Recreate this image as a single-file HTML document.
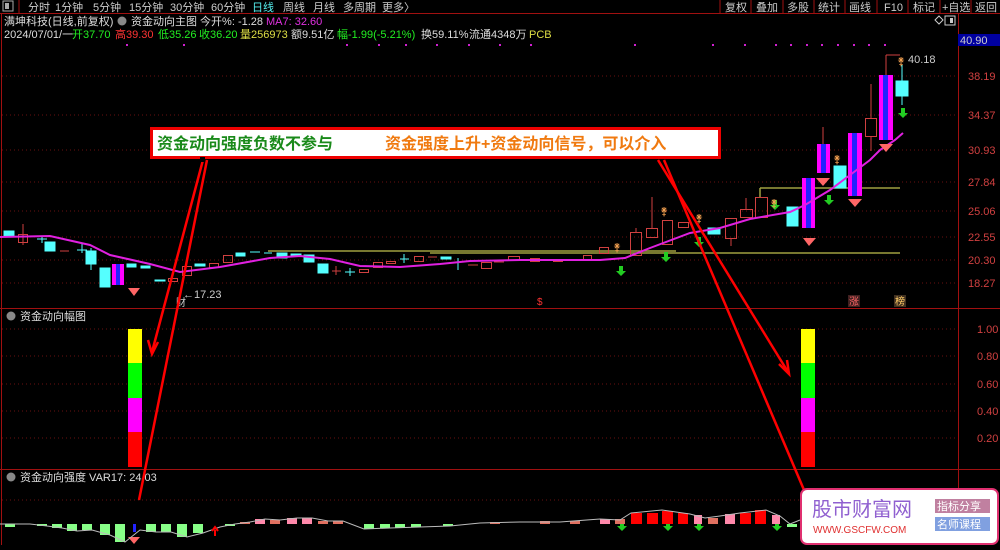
<!DOCTYPE html>
<html><head><meta charset="utf-8"><style>
body{margin:0;width:1000px;height:545px;background:#000;overflow:hidden;font-family:"Liberation Sans","Noto Sans CJK SC",sans-serif;}
svg text{font-family:"Liberation Sans","Noto Sans CJK SC",sans-serif;}
</style></head><body>
<svg width="1000" height="545" viewBox="0 0 1000 545" xmlns="http://www.w3.org/2000/svg">
<rect x="0" y="0" width="1000" height="13" fill="#000"/>
<line x1="0" y1="13.5" x2="1000" y2="13.5" stroke="#a01010"/>
<rect x="3" y="1" width="10" height="10" fill="none" stroke="#aaa"/><rect x="5" y="3" width="4" height="6" fill="#aaa"/>
<line x1="19" y1="0" x2="19" y2="13" stroke="#a01010"/>
<g font-size="11" fill="#ccc">
<text x="28" y="11">分时</text><text x="55" y="11">1分钟</text><text x="93" y="11">5分钟</text><text x="129" y="11">15分钟</text><text x="170" y="11">30分钟</text><text x="211" y="11">60分钟</text>
<text x="252" y="11" fill="#5ee">日线</text><text x="283" y="11">周线</text><text x="313" y="11">月线</text><text x="343" y="11">多周期</text><text x="382" y="11">更多〉</text>
</g>
<g stroke="#a01010"><line x1="720" y1="0" x2="720" y2="13"/><line x1="751" y1="0" x2="751" y2="13"/><line x1="783" y1="0" x2="783" y2="13"/><line x1="814" y1="0" x2="814" y2="13"/><line x1="845" y1="0" x2="845" y2="13"/><line x1="877" y1="0" x2="877" y2="13"/><line x1="908" y1="0" x2="908" y2="13"/><line x1="940" y1="0" x2="940" y2="13"/><line x1="971" y1="0" x2="971" y2="13"/></g>
<g font-size="11" fill="#ccc"><text x="725" y="11">复权</text><text x="756" y="11">叠加</text><text x="787" y="11">多股</text><text x="818" y="11">统计</text><text x="849" y="11">画线</text><text x="884" y="11">F10</text><text x="913" y="11">标记</text><text x="942" y="11">+自选</text><text x="975" y="11">返回</text></g>
<g font-size="11">
<text x="4" y="25" fill="#ddd">满坤科技(日线,前复权)</text>
<circle cx="122" cy="21" r="4.5" fill="#888"/>
<text x="131" y="25" fill="#ddd">资金动向主图 今开%: -1.28</text>
<text x="266" y="25" fill="#e030e0">MA7: 32.60</text>
<text x="4" y="38" fill="#ddd">2024/07/01/一</text>
<text x="72" y="38" fill="#2e2">开37.70</text><text x="115" y="38" fill="#f33">高39.30</text><text x="158" y="38" fill="#2e2">低35.26</text><text x="199" y="38" fill="#2e2">收36.20</text><text x="240" y="38" fill="#dd4">量256973</text><text x="291" y="38" fill="#ddd">额9.51亿</text><text x="337" y="38" fill="#2e2">幅-1.99(-5.21%)</text><text x="421" y="38" fill="#ddd">换59.11%</text><text x="469" y="38" fill="#ddd">流通4348万</text><text x="529" y="38" fill="#dd4">PCB</text>
</g>
<path d="M935 20 l4 -4 4 4 -4 4z" fill="none" stroke="#ccc"/><rect x="945" y="16" width="10" height="9" fill="none" stroke="#ccc"/><rect x="950" y="18" width="3" height="5" fill="#ccc"/>
<g stroke="#a01010" fill="none">
<line x1="958.5" y1="14" x2="958.5" y2="545"/>
<line x1="0" y1="308.5" x2="1000" y2="308.5"/>
<line x1="0" y1="469.5" x2="1000" y2="469.5"/>
<line x1="1.5" y1="14" x2="1.5" y2="545"/>
</g>
<rect x="958" y="34" width="42" height="12" fill="#0000a0"/>
<text x="960" y="44" font-size="11" fill="#ccc">40.90</text>
<g stroke="#6a1010" stroke-dasharray="1 3">
<line x1="2" y1="76" x2="958" y2="76"/><line x1="2" y1="115" x2="958" y2="115"/><line x1="2" y1="150" x2="958" y2="150"/><line x1="2" y1="182" x2="958" y2="182"/><line x1="2" y1="211" x2="958" y2="211"/><line x1="2" y1="237" x2="958" y2="237"/><line x1="2" y1="260" x2="958" y2="260"/><line x1="2" y1="283" x2="958" y2="283"/>
<line x1="2" y1="329" x2="958" y2="329"/><line x1="2" y1="356" x2="958" y2="356"/><line x1="2" y1="384" x2="958" y2="384"/><line x1="2" y1="411" x2="958" y2="411"/><line x1="2" y1="438" x2="958" y2="438"/>
<line x1="2" y1="500" x2="958" y2="500"/>
</g>
<g font-size="11" fill="#d04040">
<text x="968" y="80">38.19</text><text x="968" y="119">34.37</text><text x="968" y="154">30.93</text><text x="968" y="186">27.84</text><text x="968" y="215">25.06</text><text x="968" y="241">22.55</text><text x="968" y="264">20.30</text><text x="968" y="287">18.27</text>
<text x="977" y="333">1.00</text><text x="977" y="360">0.80</text><text x="977" y="388">0.60</text><text x="977" y="415">0.40</text><text x="977" y="442">0.20</text>
</g>
<g fill="#d020d0">
<rect x="126" y="44" width="2" height="2"/><rect x="183" y="44" width="2" height="2"/><rect x="346" y="44" width="2" height="2"/><rect x="378" y="44" width="2" height="2"/><rect x="405" y="44" width="2" height="2"/><rect x="436" y="44" width="2" height="2"/><rect x="468" y="44" width="2" height="2"/><rect x="499" y="44" width="2" height="2"/><rect x="530" y="44" width="2" height="2"/>
<rect x="634" y="44" width="2" height="2"/><rect x="712" y="44" width="2" height="2"/><rect x="744" y="44" width="2" height="2"/><rect x="775" y="44" width="2" height="2"/><rect x="790" y="44" width="2" height="2"/><rect x="806" y="44" width="2" height="2"/><rect x="821" y="44" width="2" height="2"/><rect x="837" y="44" width="2" height="2"/><rect x="853" y="44" width="2" height="2"/><rect x="868" y="44" width="2" height="2"/><rect x="884" y="44" width="2" height="2"/>
</g>
<g stroke="#a0a040" stroke-width="1.5"><line x1="268" y1="251" x2="676" y2="251"/><line x1="430" y1="253" x2="900" y2="253"/><line x1="760" y1="188" x2="900" y2="188"/><line x1="760" y1="188" x2="760" y2="197"/></g>
<g fill="#5ff" stroke="#5ff">
<rect x="4" y="231" width="10" height="6"/><line x1="37" y1="239" x2="47" y2="239"/><line x1="42" y1="236" x2="42" y2="243"/>
<rect x="45" y="242" width="10" height="9"/><line x1="77" y1="250" x2="87" y2="250"/><line x1="82" y1="244" x2="82" y2="253"/>
<rect x="86" y="251" width="10" height="13"/><line x1="91" y1="248" x2="91" y2="270"/><rect x="100" y="268" width="10" height="19"/>
<rect x="127" y="264" width="9" height="3"/><rect x="141" y="266" width="9" height="2"/><rect x="155" y="280" width="10" height="1"/>
<rect x="195" y="264" width="10" height="2"/><rect x="236" y="253" width="9" height="3"/><line x1="250" y1="252" x2="260" y2="252"/><line x1="264" y1="253" x2="272" y2="253"/>
<rect x="277" y="253" width="10" height="5"/><rect x="291" y="254" width="10" height="2"/><rect x="304" y="255" width="10" height="7"/><rect x="318" y="264" width="10" height="9"/>
<line x1="345" y1="272" x2="355" y2="272"/><line x1="350" y1="268" x2="350" y2="276"/><line x1="400" y1="259" x2="409" y2="259"/><line x1="404" y1="254" x2="404" y2="263"/>
<rect x="441" y="257" width="10" height="2"/><line x1="458" y1="258" x2="458" y2="270"/>
<rect x="708" y="228" width="12" height="6"/><rect x="787" y="207" width="11" height="19"/><rect x="834" y="166" width="12" height="22"/>
<rect x="896" y="81" width="12" height="15"/><line x1="902" y1="65" x2="902" y2="105"/>
</g>
<g fill="none" stroke="#d04040">
<rect x="18.5" y="234.5" width="9" height="8"/><line x1="23" y1="224" x2="23" y2="245"/>
<line x1="60" y1="251" x2="69" y2="251"/><rect x="168.5" y="278.5" width="9" height="3"/><rect x="182.5" y="266.5" width="9" height="9"/><rect x="209.5" y="263.5" width="9" height="4"/><rect x="223.5" y="255.5" width="9" height="7"/>
<line x1="332" y1="271" x2="341" y2="271"/><line x1="336" y1="266" x2="336" y2="275"/><rect x="359.5" y="269.5" width="9" height="3"/><rect x="373.5" y="262.5" width="9" height="5"/><rect x="386.5" y="261.5" width="9" height="2"/>
<rect x="414.5" y="256.5" width="9" height="5"/><line x1="428" y1="257" x2="437" y2="257"/><line x1="468" y1="265" x2="478" y2="265"/><rect x="481.5" y="262.5" width="10" height="6"/><line x1="494" y1="262" x2="504" y2="262"/><rect x="508.5" y="256.5" width="11" height="4"/>
<rect x="530.5" y="258.5" width="9" height="3"/><rect x="553.5" y="259.5" width="9" height="2"/><rect x="583.5" y="255.5" width="8" height="5"/><rect x="599.5" y="247.5" width="9" height="6"/>
<rect x="630.5" y="232.5" width="11" height="23"/><line x1="636" y1="228" x2="636" y2="232"/><rect x="646.5" y="228.5" width="11" height="9"/><line x1="652" y1="197" x2="652" y2="228"/>
<rect x="662.5" y="220.5" width="10" height="24"/><rect x="678.5" y="222.5" width="10" height="5"/>
<rect x="725.5" y="218.5" width="11" height="20"/><line x1="731" y1="238" x2="731" y2="246"/><rect x="740.5" y="209.5" width="12" height="8"/><line x1="746" y1="198" x2="746" y2="209"/><rect x="755.5" y="197.5" width="12" height="20"/>
<rect x="865.5" y="118.5" width="11" height="18"/><line x1="871" y1="84" x2="871" y2="118"/><line x1="871" y1="137" x2="871" y2="151"/>
<line x1="886" y1="55" x2="886" y2="75"/><line x1="886" y1="55" x2="900" y2="55"/>
</g>
<g>
<rect x="112" y="264" width="12" height="21" fill="#f0f"/><rect x="116" y="264" width="4" height="21" fill="#22f"/>
<rect x="802" y="178" width="13" height="50" fill="#f0f"/><rect x="806" y="178" width="5" height="50" fill="#22f"/>
<rect x="817" y="144" width="13" height="29" fill="#f0f"/><rect x="821" y="144" width="5" height="29" fill="#22f"/><line x1="823" y1="127" x2="823" y2="144" stroke="#d04040"/>
<rect x="848" y="133" width="14" height="63" fill="#f0f"/><rect x="852" y="133" width="5" height="63" fill="#22f"/>
<rect x="879" y="75" width="14" height="65" fill="#f0f"/><rect x="883" y="75" width="5" height="65" fill="#22f"/>
</g>
<polyline fill="none" stroke="#e020e0" stroke-width="2" points="0,237 50,236 90,245 110,255 150,264 180,272 220,267 270,258 300,256 330,259 360,266 400,267 440,264 470,261 520,260 560,260 600,260 625,258 650,248 690,233 720,228 750,219 790,212 805,205 830,190 850,175 870,160 880,150 895,140 903,133"/>
<g fill="#f66"><path d="M128 288 h12 l-6 8z"/><path d="M816 178 h14 l-7 8z"/><path d="M803 238 h13 l-7 8z"/><path d="M848 199 h14 l-7 8z"/><path d="M879 144 h14 l-7 8z"/><path d="M129 333 h12 l-6 6z"/><path d="M802 333 h12 l-6 6z"/><path d="M128 537 h12 l-6 7z"/></g>
<g fill="#2c2">
<path d="M619 266 h4 v5 h3 l-5 5 -5 -5 h3z"/><path d="M664 252 h4 v5 h3 l-5 5 -5 -5 h3z"/><path d="M697 237 h4 v5 h3 l-5 5 -5 -5 h3z"/><path d="M773 200 h4 v5 h3 l-5 5 -5 -5 h3z"/><path d="M827 195 h4 v5 h3 l-5 5 -5 -5 h3z"/><path d="M901 108 h4 v5 h3 l-5 5 -5 -5 h3z"/>
<path d="M620 521 h4 v5 h3 l-5 5 -5 -5 h3z"/><path d="M666 521 h4 v5 h3 l-5 5 -5 -5 h3z"/><path d="M697 521 h4 v5 h3 l-5 5 -5 -5 h3z"/><path d="M775 521 h4 v5 h3 l-5 5 -5 -5 h3z"/>
</g>
<g fill="#f2a050" font-size="11"><text x="613" y="251">⚵</text><text x="660" y="215">⚵</text><text x="695" y="222">⚵</text><text x="770" y="207">⚵</text><text x="833" y="163">⚵</text><text x="897" y="65">⚵</text></g>
<text x="908" y="63" font-size="11" fill="#ccc">40.18</text>
<text x="183" y="298" font-size="11" fill="#ccc">←17.23</text>
<text x="176" y="306" font-size="10" fill="#ccc">财</text>
<text x="537" y="305" font-size="10" fill="#f33">$</text>
<rect x="848" y="295" width="12" height="12" fill="#402020"/><text x="849" y="305" font-size="10" fill="#f66">涨</text>
<rect x="894" y="295" width="12" height="12" fill="#403020"/><text x="895" y="305" font-size="10" fill="#fc6">榜</text>
<circle cx="11" cy="316" r="4.5" fill="#888"/><text x="20" y="320" font-size="11" fill="#ddd">资金动向幅图</text>
<rect x="128" y="329" width="14" height="34" fill="#ff0"/><rect x="128" y="363" width="14" height="35" fill="#0f0"/><rect x="128" y="398" width="14" height="34" fill="#f0f"/><rect x="128" y="432" width="14" height="35" fill="#f00"/>
<rect x="801" y="329" width="14" height="34" fill="#ff0"/><rect x="801" y="363" width="14" height="35" fill="#0f0"/><rect x="801" y="398" width="14" height="34" fill="#f0f"/><rect x="801" y="432" width="14" height="35" fill="#f00"/>
<circle cx="11" cy="477" r="4.5" fill="#888"/><text x="20" y="481" font-size="11" fill="#ddd">资金动向强度  VAR17: 24.03</text>
<g fill="#8f8">
<rect x="5" y="524" width="10" height="3"/><rect x="37" y="524" width="10" height="2"/><rect x="52" y="524" width="10" height="4"/><rect x="67" y="524" width="10" height="7"/><rect x="82" y="524" width="10" height="6"/><rect x="100" y="524" width="10" height="11"/><rect x="115" y="524" width="10" height="18"/><rect x="146" y="524" width="10" height="8"/><rect x="161" y="524" width="10" height="8"/><rect x="177" y="524" width="10" height="13"/><rect x="193" y="524" width="10" height="9"/><rect x="225" y="524" width="10" height="2"/>
<rect x="364" y="524" width="10" height="5"/><rect x="380" y="524" width="10" height="4"/><rect x="395" y="524" width="10" height="4"/><rect x="411" y="524" width="10" height="3"/><rect x="443" y="524" width="10" height="2"/><rect x="787" y="524" width="10" height="3"/>
</g>
<rect x="133" y="524" width="3" height="8" fill="#22f"/>
<g fill="#e07060"><rect x="240" y="522" width="10" height="2"/><rect x="270" y="520" width="10" height="4"/><rect x="318" y="521" width="10" height="3"/><rect x="333" y="521" width="10" height="3"/><rect x="490" y="522" width="10" height="2"/><rect x="540" y="521" width="10" height="3"/><rect x="570" y="521" width="10" height="3"/><rect x="615" y="519" width="10" height="5"/><rect x="708" y="518" width="10" height="6"/></g>
<g fill="#f8a"><rect x="255" y="519" width="10" height="5"/><rect x="287" y="518" width="10" height="6"/><rect x="302" y="518" width="10" height="6"/><rect x="600" y="519" width="10" height="5"/><rect x="725" y="514" width="10" height="10"/><rect x="694" y="515" width="8" height="9"/><rect x="772" y="515" width="8" height="9"/></g>
<g fill="#f00"><rect x="631" y="513" width="11" height="11"/><rect x="647" y="513" width="11" height="11"/><rect x="662" y="511" width="11" height="13"/><rect x="678" y="513" width="10" height="11"/><rect x="740" y="513" width="11" height="11"/><rect x="755" y="510" width="11" height="14"/></g>
<polyline fill="none" stroke="#bbb" points="0,524 15,524 30,524 47,526 62,528 77,531 92,530 110,535 125,542 140,530 156,532 171,532 187,537 203,533 220,527 235,524 250,522 265,519 280,520 297,518 312,518 328,521 343,521 364,529 390,528 420,527 450,526 480,523 520,522 560,522 600,519 620,520 631,513 662,510 690,514 705,518 720,516 740,513 766,510 780,516 790,524 800,520"/>
<path d="M215 536 v-6 M212 531 l3 -4 3 4" stroke="#f00" stroke-width="2" fill="none"/>
<rect x="151.5" y="128.5" width="568" height="29" fill="#fff" stroke="#e00" stroke-width="3"/>
<text x="157" y="149" font-size="16" font-weight="bold" fill="#1a8a1a">资金动向强度负数不参与</text>
<text x="385" y="149" font-size="16" font-weight="bold" fill="#f07a10">资金强度上升+资金动向信号，可以介入</text>
<g stroke="#f00" stroke-width="2.5" fill="none">
<line x1="203" y1="160" x2="152" y2="352"/><path d="M148 340 l4 14 6 -12"/>
<line x1="207" y1="160" x2="139" y2="500"/>
<line x1="658" y1="160" x2="788" y2="372"/><path d="M779 364 l10 10 -2 -14"/>
<line x1="664" y1="160" x2="804" y2="490"/>
</g>
<rect x="200" y="157" width="5" height="5" fill="#000"/>
<rect x="801" y="489" width="197" height="55" rx="6" fill="#fff" stroke="#e03070" stroke-width="2"/>
<text x="812" y="516" font-size="20" fill="#9060d0" font-family="Liberation Serif,Noto Serif CJK SC,serif">股市财富网</text>
<text x="813" y="533" font-size="10" fill="#e03030" font-family="Liberation Serif,serif">WWW.GSCFW.COM</text>
<rect x="935" y="499" width="55" height="14" fill="#c080a0"/><text x="937" y="510" font-size="11" fill="#fff">指标分享</text>
<rect x="935" y="517" width="55" height="14" fill="#80a0e0"/><text x="937" y="528" font-size="11" fill="#fff">名师课程</text>
</svg>
</body></html>
